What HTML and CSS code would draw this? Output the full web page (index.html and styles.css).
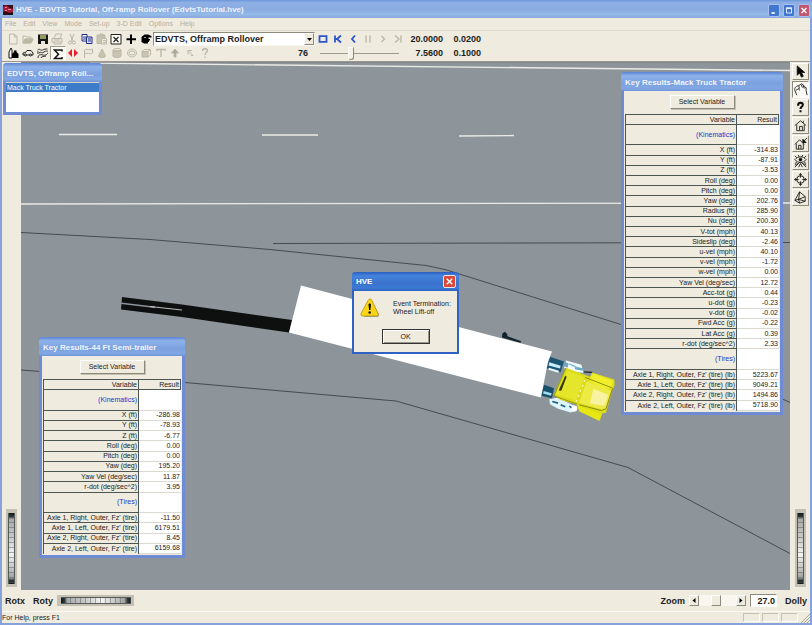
FILE: index.html
```html
<!DOCTYPE html>
<html lang="en">
<head>
<meta charset="utf-8">
<title>HVE - EDVTS Tutorial, Off-ramp Rollover</title>
<link rel="stylesheet" href="styles.css">
</head>
<body>
<div class="app">
  <header class="titlebar">
    <svg class="logo" viewBox="0 0 10 10"><rect width="10" height="10" fill="#3a0d18"/><path d="M0 2l3-2 4 3 3 1v3l-4 1-3-2-3 1z" fill="#a11c35"/><path d="M2 2h2v1H2zM5 4h3v1H5zM2 5h2v1H2z" fill="#f08a9a"/><path d="M6 8h4v2H5z" fill="#10131c"/></svg>
    <h1>HVE - EDVTS Tutorial, Off-ramp Rollover (EdvtsTutorial.hve)</h1>
    <div class="caption-buttons">
      <button class="cap" aria-label="Minimize"><svg viewBox="0 0 12 12"><path d="M3 8h4v2H3z" fill="#fff"/></svg></button>
      <button class="cap" aria-label="Maximize"><svg viewBox="0 0 12 12"><path d="M3 3.500h6v5.500H3z" fill="none" stroke="#fff"/><path d="M2.500 3h7" stroke="#fff" stroke-width="1.500"/></svg></button>
      <button class="cap cap-close" aria-label="Close"><svg viewBox="0 0 12 12"><path d="M3 3l6 6M9 3l-6 6" stroke="#fff" stroke-width="1.600"/></svg></button>
    </div>
  </header>
  <nav class="menubar">
    <a href="#">File</a><a href="#">Edit</a><a href="#">View</a><a href="#">Mode</a><a href="#">Set-up</a><a href="#">3-D Edit</a><a href="#">Options</a><a href="#">Help</a>
  </nav>
  <div class="toolbars">
    <div class="toolbar">
      <div class="icons icons-file">
        <button aria-label="New"><svg class="off" viewBox="0 0 14 14"><path d="M3.500 2h5l2.500 2.500V12H3.500zM8.500 2v3H11"/></svg></button>
        <button aria-label="Open"><svg class="off" viewBox="0 0 14 14"><path d="M2 11V4h3l1 1h4v2M2 11l2-4h8l-2 4z"/><path d="M4 7h8l-2 4H2z" fill="#bdb8a4"/></svg></button>
        <button aria-label="Save"><svg viewBox="0 0 14 14"><path d="M2 2.500h10v9.500H2z" fill="#161616"/><path d="M4 3h6v4H4z" fill="#8e9a62"/><path d="M5 9h4v3H5z" fill="#e8e8d8"/></svg></button>
        <button aria-label="Print"><svg class="off" viewBox="0 0 14 14"><path d="M4 6l2-4h6l-2 4M2 6.500h10V10H2zM4 10v2h7l1-2M4 8h6"/></svg></button>
        <button aria-label="Cut"><svg class="off" viewBox="0 0 14 14"><path d="M5 2l3 7M9 2L6 9"/><circle cx="5" cy="10.500" r="1.500"/><circle cx="9" cy="10.500" r="1.500"/></svg></button>
        <button aria-label="Copy"><svg viewBox="0 0 14 14"><path d="M2 2.500h5V9H2z" fill="#fff" stroke="#1b2a82"/><path d="M3 5h3M3 7h3" stroke="#1b2a82"/><path d="M6.500 5h5.500v6.500H6.500z" fill="#dfe5ff" stroke="#1b2a82"/><path d="M8 7h3M8 9h3" stroke="#1b2a82"/></svg></button>
        <button aria-label="Paste"><svg class="off" viewBox="0 0 14 14"><path d="M2 3h8v8.500H2z" fill="#c9c4b1"/><path d="M5 2h3v2H5z"/><path d="M6.500 6.500h5V12h-5z" fill="#efebdf"/><path d="M8 8.500h3M8 10.500h3"/></svg></button>
        <button aria-label="Reset"><svg viewBox="0 0 14 14"><path d="M2 2.500h10v9.500H2z" fill="#fbfaf3" stroke="#222"/><path d="M4.500 5l5 5M9.500 5l-5 5" stroke="#222" stroke-width="1.200"/></svg></button>
        <button aria-label="Add"><svg viewBox="0 0 14 14"><path d="M7 2.500v9.500M2.500 7.200h9.500" stroke="#000" stroke-width="2"/></svg></button>
        <button aria-label="Pick"><svg viewBox="0 0 14 14"><path d="M2.500 5l3-2.500H9l3.500 1.500v1.500H9.500V7H11v1.500h-1V10H9v1.500H5L2.500 10z" fill="#000"/><path d="M5 5.500h2" stroke="#999"/></svg></button>
      </div>
      <label class="combo" aria-label="Event">
        <select><option>EDVTS, Offramp Rollover</option></select>
        <span class="combo-arrow"><svg viewBox="0 0 5 3"><path d="M0 0h5L2.500 3z"/></svg></span>
      </label>
      <div class="icons icons-play">
        <button aria-label="Stop"><svg class="on" viewBox="0 0 14 14"><path d="M3.500 4.200h7v5.600h-7z"/></svg></button>
        <button aria-label="First"><svg class="on" viewBox="0 0 14 14"><path d="M4 3.500v7M10 3.500L6 7l4 3.500M4 7h3"/></svg></button>
        <button aria-label="Back"><svg class="on" viewBox="0 0 14 14"><path d="M9 3.500L6 7l3 3.500"/></svg></button>
        <button aria-label="Pause"><svg class="off thick" viewBox="0 0 14 14"><path d="M5 3.500v7M9 3.500v7"/></svg></button>
        <button aria-label="Forward"><svg class="off thick" viewBox="0 0 14 14"><path d="M5.500 4L8.500 7l-3 3"/></svg></button>
        <button aria-label="Last"><svg class="off thick" viewBox="0 0 14 14"><path d="M4 3.500L8 7l-4 3.500M10 3.500v7"/></svg></button>
      </div>
      <output class="time">20.0000</output><output class="time step">0.0200</output>
    </div>
    <div class="toolbar">
      <div class="icons icons-mode">
        <button aria-label="People"><svg viewBox="0 0 14 14"><path d="M3 12V6l1-2 1-2 1 2v8z" fill="#fff" stroke="#111"/><path d="M6 12V8l2-2V4.500h2.500V6L12.500 8v4z" fill="#000"/></svg></button>
        <button aria-label="Vehicle"><svg viewBox="0 0 14 14" fill="none" stroke="#222"><path d="M2 9V7l2.500-.5L6 4.500h4L12 7v2H2z"/><circle cx="4.500" cy="9" r="1" fill="#efebdf"/><circle cx="9.500" cy="9" r="1" fill="#efebdf"/></svg></button>
        <button aria-label="Environment"><svg viewBox="0 0 14 14" fill="none" stroke="#333"><path d="M1.500 4c2-2 3 1 5 0s3-1 5-1M3 7c2-2 3 1 5-1s3 0 4-1M2 12c0-3 2-4 5-3s4-1 5-2M5 12c0-2 3-1 5-2M2 5v3"/></svg></button>
        <button class="pressed" aria-label="Event"><svg viewBox="0 0 14 14"><path d="M11 4.500V3H3.500l4 4.200-4 4.300H11V10" fill="none" stroke="#111" stroke-width="1.500"/></svg></button>
        <button aria-label="Playback"><svg viewBox="0 0 14 14"><path d="M6 3v8L2 7zM8 3v8l4-4z" fill="#e8202c"/><path d="M5.500 4v6M8.500 4v6" stroke="#e8202c"/></svg></button>
        <button aria-label="Flag"><svg class="off" viewBox="0 0 14 14"><path d="M3.500 12V4c3-2 4 1 8-1v4c-3 2-5-1-8 1"/></svg></button>
        <button aria-label="Cone"><svg class="off" viewBox="0 0 14 14"><path d="M7 3l3.500 7c0 2-7 2-7 0z" fill="#c9c4b1"/></svg></button>
        <button aria-label="Cylinder"><svg class="off" viewBox="0 0 14 14"><path d="M3 4v6c0 2 8 2 8 0V4" fill="#c9c4b1"/><ellipse cx="7" cy="4" rx="4" ry="1.500"/></svg></button>
        <button aria-label="Sphere"><svg class="off" viewBox="0 0 14 14"><ellipse cx="7" cy="7" rx="4.500" ry="4"/><ellipse cx="7" cy="7" rx="3" ry="2"/></svg></button>
        <button aria-label="Box"><svg class="off" viewBox="0 0 14 14"><path d="M3 5.500h6V11H3z" fill="#c9c4b1"/><path d="M3 5.500l2-2h6.500V9L9 11M9 5.500l2.500-2"/></svg></button>
        <button aria-label="Text"><svg class="off thick" viewBox="0 0 14 14"><path d="M3 5V3.500h8V5M7 3.500V11"/></svg></button>
        <button aria-label="Light"><svg class="off" viewBox="0 0 14 14"><path d="M7 3l3.500 4H8v4H6V7H3.500z" fill="#aaa593"/></svg></button>
        <button aria-label="Select"><svg class="off" viewBox="0 0 14 14"><path d="M5 4.500h4M5 4.500v4M5 4.500l5 5M8 9.500h2"/></svg></button>
        <button aria-label="Help"><svg class="off thick" viewBox="0 0 14 14"><path d="M4.500 5c0-3 5-3 5-.5C9.500 6.500 7 6 7 9M7 10.500V12"/></svg></button>
      </div>
      <label class="frame" for="frame">76</label>
      <input id="frame" class="slider" type="range" min="0" max="200" value="76">
      <output class="time">7.5600</output><output class="time step">0.1000</output>
    </div>
  </div>

  <main class="workspace">
    <aside class="rail rail-left"><input class="wheel wheel-v" type="range" aria-label="Rotate X"></aside>
    <section class="viewport">
      <svg class="scene" viewBox="21 62 769 529" preserveAspectRatio="xMidYMid slice">
        <rect x="21" y="62" width="769" height="529" fill="#8d959b"/>
        <g fill="none" stroke="#e9eae4" stroke-width="1.300">
          <path d="M59 135h58M262 135.500h56M459 136.500l55-.5"/>
          <path d="M21 204.500L790 203.500"/><path d="M90 63.500L600 69l190 2"/>
        </g>
        <path d="M21 62.500h769" stroke="#777b7d"/>
        <g fill="none" stroke="#34393c" stroke-width=".8">
          <path d="M21 233l129 7 120 10 156 16 19 4 176 55 169 78"/>
          <path d="M273 244l517-1"/>
          <path d="M21 370.500L185 383l211 18.500L628 468l162 86"/>
        </g>
        <path d="M122 297.500l60 7.500 110 15.500-3 12.500-107-15.500-61-7.500z" fill="#0d100f"/>
        <path d="M121 303.800l34 4" stroke="#8d959b" stroke-width="1.600"/>
        <path d="M150 307l32 3.500" stroke="#cfd3d4" stroke-width=".9"/>
        <g transform="translate(460 310) scale(.3333)">
          <path d="M127 72l8-5 7 7v6l42 15-3 5-55-16z" fill="#11232c"/>
          <path d="M270 142l42 14-10 32-42-12z" fill="#1d5673"/><path d="M268 158l34 11-2 8-34-9z" fill="#c9ecfa"/><path d="M266 178l30 9" stroke="#eaf9ff" stroke-width="6"/>
          <path d="M268 187l26 6-14 39-26-7z" fill="#8d959b"/>
          <path d="M252 226l30 10-6 30-34-8z" fill="#174f69"/><path d="M250 248l24 7" stroke="#a4dcf2" stroke-width="8"/>
          <path d="M318 153l46 13 7 24-22-2-37-12z" fill="#f1fbff"/><path d="M314 157l12 5-3 12-10-3zM345 171l24 5-1 8-23-5z" fill="#68a9c7"/><path d="M328 163l25 12" stroke="#81b7ce" stroke-width="4"/>
          <path d="M268 269l24-4 54 25 4 14-18 5-38-11-24-14z" fill="#dff5fc"/><path d="M277 276l17 5M302 286l14 6M328 290l12 8" stroke="#1e6181" stroke-width="5"/><circle cx="343" cy="297" r="9" fill="#fff"/>
          <path d="M371 187l26 2" stroke="#20282b" stroke-width="4"/>
          <path d="M318 175l72 27 6-13 67 21 1 17-6 13-20 70-14 2-4 22-62-28-9-22-49-13-19-15z" fill="#dcdc18"/>
          <path d="M393 204l6-12 59 22-4 22-22 2-44-23z" fill="#f0ef2a"/>
          <path d="M355 290l72 23-10 21-56-28z" fill="#e8e716"/>
          <path d="M380 215l74 28-18 60-79-23z" fill="#eeea45"/><path d="M400 238l45 18-11 33-44-7z" fill="#f8f3a0"/>
          <path d="M322 184l50 19-24 71-62-20z" fill="#e5e52c"/><path d="M358 286l66 17 14-5 20-62M376 204l80 31" fill="none" stroke="#8a8c0e" stroke-width="3"/>
          <path d="M316 198l4 4-16 42-8-1z" fill="#34370b"/><path d="M374 212l-26 66" stroke="#f9fbc4" stroke-width="4" stroke-dasharray="5 11"/>
          <path d="M318 175l-36 84 70 25" fill="none" stroke="#989a0c" stroke-width="3"/>
        </g>
        <path d="M301 286l251 66-4 10-7 36-252-65z" fill="#fff"/>
      </svg>
    </section>
    <aside class="rail rail-right">
      <div class="view-tools">
        <button aria-label="Arrow"><svg viewBox="0 0 16 16"><path d="M4.500 2v10l2.500-2.500L9 14l2-1-2-4h3.500z" fill="#000"/></svg></button>
        <button class="pressed" aria-label="Hand"><svg viewBox="0 0 16 16"><path d="M4 14L2 9c-1-3 2-5 4-5l3-2 2 1 1 2 2 1v3l1 5M6 4l1 3M9 3l1 3M11 4l1 3M3 9l3-2 1 2" fill="#fbfaf5"/></svg></button>
        <button aria-label="Help"><svg viewBox="0 0 16 16"><path d="M5.500 6V4.500C6 2.500 10.500 2.500 10.500 5S8 7 8 9.500M8 11v2" stroke-width="2.200"/></svg></button>
        <button aria-label="Home"><svg viewBox="0 0 16 16"><path d="M2 8l6-5 6 5M4 7v6.500h8V7M7 13V9h3v4M11 5V3"/></svg></button>
        <button aria-label="Set home"><svg viewBox="0 0 16 16"><path d="M2 9l5-5 5 5M3.500 8v6h7.500V8M6 14v-4h2.500v4"/><path d="M15 2l-4 4M10.500 3.500V7H14z" fill="#000"/></svg></button>
        <button aria-label="View all"><svg viewBox="0 0 16 16"><path d="M2 6c3-4 9-4 12 0-3 4-9 4-12 0zM2 2l2 2M5.500 1l1 2M10.500 1l-1 2M14 2l-2 2M2 14l5-5M14 14L9 9M6 14l2-4 2 4M2 10l2-1M14 10l-2-1M2 12l3-2M14 12l-3-2"/><circle cx="8" cy="6" r="1.500" fill="#000"/></svg></button>
        <button aria-label="Seek"><svg viewBox="0 0 16 16"><circle cx="8" cy="8" r="4"/><path d="M8 2v4M8 10v4M2 8h4M10 8h4M6.500 3.500L8 1.500l1.500 2M6.500 12.500L8 14.500l1.500-2M3.500 6.500L1.500 8l2 1.500M12.500 6.500l2 1.500-2 1.500"/></svg></button>
        <button aria-label="Perspective"><svg viewBox="0 0 16 16"><path d="M2 11l5-9 6 5v5l-6 2zM2 11l4-1 7-3M6 10l1 4M7 2L6 10l7 2"/></svg></button>
      </div>
      <input class="wheel wheel-v" type="range" aria-label="Dolly wheel">
    </aside>
  </main>

  <div class="viewbar">
    <span class="vlabel">Rotx</span>
    <label class="vlabel" for="roty">Roty</label>
    <input id="roty" class="wheel wheel-h" type="range">
    <label class="vlabel zoom-label" for="zoom">Zoom</label>
    <div class="scroller">
      <button aria-label="Zoom out"><svg viewBox="0 0 4 5"><path d="M3.500 0v5L.5 2.500z"/></svg></button>
      <input type="range" aria-label="Zoom" min="0" max="100" value="45">
      <button aria-label="Zoom in"><svg viewBox="0 0 4 5"><path d="M.5 0v5l3-2.500z"/></svg></button>
    </div>
    <input id="zoom" class="zoom-value" type="text" value="27.0">
    <span class="vlabel">Dolly</span>
  </div>
  <footer class="statusbar">
    <span class="hint">For Help, press F1</span>
    <span class="pane"></span><span class="pane"></span><span class="pane"></span>
    <svg class="grip" viewBox="0 0 10 10"><path d="M1 10l9-9M4 10l6-6M7 10l3-3" stroke="#aaa58f"/></svg>
  </footer>

  <section class="window list-window">
    <h2>EDVTS, Offramp Roll...</h2>
    <ul class="objects"><li>Mack Truck Tractor</li></ul>
  </section>

  <section class="window results-window tractor">
    <h2>Key Results-Mack Truck Tractor</h2>
    <div class="results-body">
      <button class="push">Select Variable</button>
      <table>
        <thead><tr><th>Variable</th><th>Result</th></tr></thead>
        <tbody>
          <tr class="group"><th>(Kinematics)</th><td></td></tr>
          <tr><th>X (ft)</th><td>-314.83</td></tr>
          <tr><th>Y (ft)</th><td>-87.91</td></tr>
          <tr><th>Z (ft)</th><td>-3.53</td></tr>
          <tr><th>Roll (deg)</th><td>0.00</td></tr>
          <tr><th>Pitch (deg)</th><td>0.00</td></tr>
          <tr><th>Yaw (deg)</th><td>202.76</td></tr>
          <tr><th>Radius (ft)</th><td>285.90</td></tr>
          <tr><th>Nu (deg)</th><td>200.30</td></tr>
          <tr><th>V-tot (mph)</th><td>40.13</td></tr>
          <tr><th>Sideslip (deg)</th><td>-2.46</td></tr>
          <tr><th>u-vel (mph)</th><td>40.10</td></tr>
          <tr><th>v-vel (mph)</th><td>-1.72</td></tr>
          <tr><th>w-vel (mph)</th><td>0.00</td></tr>
          <tr><th>Yaw Vel (deg/sec)</th><td>12.72</td></tr>
          <tr><th>Acc-tot (g)</th><td>0.44</td></tr>
          <tr><th>u-dot (g)</th><td>-0.23</td></tr>
          <tr><th>v-dot (g)</th><td>-0.02</td></tr>
          <tr><th>Fwd Acc (g)</th><td>-0.22</td></tr>
          <tr><th>Lat Acc (g)</th><td>0.39</td></tr>
          <tr><th>r-dot (deg/sec^2)</th><td>2.33</td></tr>
          <tr class="group"><th>(Tires)</th><td></td></tr>
          <tr><th>Axle 1, Right, Outer, Fz' (tire) (lb)</th><td>5223.67</td></tr>
          <tr><th>Axle 1, Left, Outer, Fz' (tire) (lb)</th><td>9049.21</td></tr>
          <tr><th>Axle 2, Right, Outer, Fz' (tire) (lb)</th><td>1494.86</td></tr>
          <tr><th>Axle 2, Left, Outer, Fz' (tire) (lb)</th><td>5718.90</td></tr>
        </tbody>
      </table>
    </div>
  </section>

  <section class="window results-window trailer">
    <h2>Key Results-44 Ft Semi-trailer</h2>
    <div class="results-body">
      <button class="push">Select Variable</button>
      <table>
        <thead><tr><th>Variable</th><th>Result</th></tr></thead>
        <tbody>
          <tr class="group"><th>(Kinematics)</th><td></td></tr>
          <tr><th>X (ft)</th><td>-286.98</td></tr>
          <tr><th>Y (ft)</th><td>-78.93</td></tr>
          <tr><th>Z (ft)</th><td>-6.77</td></tr>
          <tr><th>Roll (deg)</th><td>0.00</td></tr>
          <tr><th>Pitch (deg)</th><td>0.00</td></tr>
          <tr><th>Yaw (deg)</th><td>195.20</td></tr>
          <tr><th>Yaw Vel (deg/sec)</th><td>11.87</td></tr>
          <tr><th>r-dot (deg/sec^2)</th><td>3.95</td></tr>
          <tr class="group"><th>(Tires)</th><td></td></tr>
          <tr><th>Axle 1, Right, Outer, Fz' (tire)</th><td>-11.50</td></tr>
          <tr><th>Axle 1, Left, Outer, Fz' (tire)</th><td>6179.51</td></tr>
          <tr><th>Axle 2, Right, Outer, Fz' (tire)</th><td>8.45</td></tr>
          <tr><th>Axle 2, Left, Outer, Fz' (tire)</th><td>6159.68</td></tr>
        </tbody>
      </table>
    </div>
  </section>

  <section class="dialog" role="alertdialog" aria-labelledby="dlg-title">
    <header><h2 id="dlg-title">HVE</h2><button class="dlg-close" aria-label="Close"><svg viewBox="0 0 12 12"><path d="M3 3l6 6M9 3l-6 6" stroke="#fff" stroke-width="1.500"/></svg></button></header>
    <div class="dialog-body">
      <div class="message">
        <svg class="warn" viewBox="0 0 20 20"><path d="M11 1.500L19.500 17l-1.500 2H4z" fill="#77786d" opacity=".6"/><path d="M10 1c1 0 1.300.4 1.700 1L18 15.500c.6 1.500 0 2.500-1.500 2.500h-14C1 18 .5 17 1 15.500L8.300 2c.4-.7.900-1 1.700-1z" fill="#fbd516" stroke="#a98a08" stroke-width=".7"/><path d="M8.500 6.500c0-1.500 2.500-1.500 2.500 0l-.6 5.500h-1.300z" fill="#111"/><circle cx="9.700" cy="14.500" r="1.300" fill="#111"/></svg>
        <p>Event Termination:<br>Wheel Lift-off</p>
      </div>
      <button class="ok">OK</button>
    </div>
  </section>
</div>
</body>
</html>
```
FILE: styles.css
```css
* { box-sizing: border-box; }
html, body { height: 100%; margin: 0; }
body { font: 7px/8px "Liberation Sans", Arial, sans-serif; color: #1c1c1c; overflow: hidden; }
h1, h2, p, ul { margin: 0; padding: 0; }
button, input, select { font: inherit; color: inherit; margin: 0; padding: 0; border: 0; background: none; border-radius: 0; }
svg { display: block; }
a { color: inherit; text-decoration: none; }

.app { position: relative; display: flex; flex-direction: column; min-height: 100%; background: #efebdf; border: solid #88a2dc; border-width: 0 2px 2px; }

.titlebar { display: flex; align-items: center; gap: 3px; height: 18px; margin: 0 -2px; padding: 2px 2px 0 3px; background: linear-gradient(#6f97dc, #8fb0e4 15%, #8aabe0 55%, #93bbe9 80%, #8aa6dc); }
.logo { width: 10px; height: 10px; }
.titlebar h1 { flex: 1; font: bold 8px/12px "Liberation Sans", Arial, sans-serif; color: #eef3fb; white-space: nowrap; }
.caption-buttons { display: flex; gap: 3px; }
.cap { width: 12px; height: 13px; border: 1px solid #a8c0ef; border-radius: 2px; background: #4277cf; }
.cap svg { width: 10px; height: 11px; }
.cap-close { background: #c2566c; }

.menubar { display: flex; gap: 7px; height: 13px; padding: 0 3px; align-items: center; color: #b5b09e; font-size: 7px; border-bottom: 1px solid #dedacb; }

.toolbars { height: 31px; padding: 1px 0 0 4px; border-bottom: 1px solid #9a988c; }
.toolbar { display: flex; align-items: center; height: 14px; }
.icons { display: grid; flex: none; }
.icons button { display: grid; place-items: center; height: 14px; }
.icons svg { width: 14px; height: 14px; }
.icons .pressed { background: #fbfaf4; border: solid; border-width: 1px; border-color: #a09c8c #fff #fff #a09c8c; }
.icons-file { width: 147px; grid-template-columns: repeat(10, 1fr); }
.icons-play { width: 90px; grid-template-columns: repeat(6, 1fr); }
.icons-mode { width: 206px; grid-template-columns: repeat(14, 1fr); }
.off { fill: none; stroke: #bdb8a6; }
.thick { stroke-width: 1.4; }
.on { fill: none; stroke: #2b55c8; stroke-width: 1.8; }
.combo { position: relative; display: flex; width: 162px; height: 14px; background: #fff; border: 1px solid; border-color: #8d8a7c #f8f6ee #f8f6ee #8d8a7c; }
.combo select { flex: 1; appearance: none; padding: 0 1px; font: bold 9px/12px "Liberation Sans", Arial, sans-serif; }
.combo-arrow { display: grid; place-items: center; width: 10px; background: #efebdf; border: 1px solid; border-color: #fff #8d8a7c #8d8a7c #fff; pointer-events: none; }
.combo-arrow svg { width: 5px; height: 3px; }
.time { width: 38px; text-align: right; font: bold 9px/12px "Liberation Sans", Arial, sans-serif; }
.frame { width: 96px; text-align: right; font: bold 9px/12px "Liberation Sans", Arial, sans-serif; }
.slider { appearance: none; width: 79px; height: 14px; margin: 0 6px 0 12px; background: linear-gradient(#9e9b8c, #9e9b8c) center / 100% 1px no-repeat; }
.slider::-webkit-slider-thumb { appearance: none; width: 6px; height: 13px; background: #f3f0e6; border: 1px solid; border-color: #fff #8d8a7c #8d8a7c #fff; border-radius: 0 0 3px 3px; }

.workspace { flex: 1; display: flex; min-height: 0; }
.rail { display: flex; flex-direction: column; align-items: center; padding-bottom: 3px; }
.rail-left { width: 19px; }
.rail-right { width: 20px; }
.rail .wheel { margin-top: auto; }
.viewport { position: relative; flex: 1; min-width: 0; overflow: hidden; }
.scene { position: absolute; inset: 0; width: 100%; height: 100%; }
.view-tools { display: grid; gap: 1px; padding-top: 1px; }
.view-tools button { width: 17px; height: 17px; border: 1px solid; border-color: #fff #8d8a7c #8d8a7c #fff; }
.view-tools .pressed { background: #fbfaf5; border-color: #8d8a7c #fff #fff #8d8a7c; }
.view-tools svg { width: 15px; height: 15px; fill: none; stroke: #111; stroke-width: .9; }

.wheel { appearance: none; }
.wheel::-webkit-slider-thumb { appearance: none; width: 1px; height: 1px; }
.wheel-v { writing-mode: vertical-lr; width: 11px; height: 78px; border: solid #c4c1b4; border-width: 4px 2px 3px; background: repeating-linear-gradient(transparent 0 4px, #5d5f5f80 4px 5px), linear-gradient(#11191b, #2f3839 5%, #a9abab 9%, #c9c9c7 35%, #f4f4f1 58%, #c4c4c2 78%, #a0a2a2 91%, #2f3839 95%, #11191b); box-shadow: inset 1px 0 #555b5b, inset -1px 0 #555b5b; }
.wheel-h { width: 77px; height: 11px; border: solid #c4c1b4; border-width: 2px 3px 2px 4px; background: repeating-linear-gradient(90deg, transparent 0 4px, #5d5f5f80 4px 5px), linear-gradient(90deg, #11191b, #2f3839 5%, #a9abab 9%, #c9c9c7 35%, #f4f4f1 58%, #c4c4c2 78%, #a0a2a2 91%, #2f3839 95%, #11191b); box-shadow: inset 0 1px #555b5b, inset 0 -1px #555b5b; }

.viewbar { display: flex; align-items: center; gap: 4px; height: 21px; padding: 0 3px; }
.vlabel { font: bold 9px/12px "Liberation Sans", Arial, sans-serif; }
.viewbar .vlabel:first-child { margin-right: 4px; }
.zoom-label { margin-left: auto; }
.scroller { display: flex; width: 57px; height: 11px; background: #f8f6ef; }
.scroller button { display: grid; place-items: center; width: 10px; border: 1px solid; border-color: #fff #8d8a7c #8d8a7c #fff; background: #efebdf; }
.scroller svg { width: 4px; height: 5px; }
.scroller input { appearance: none; flex: 1; min-width: 0; }
.scroller input::-webkit-slider-thumb { appearance: none; width: 10px; height: 11px; background: #efebdf; border: 1px solid; border-color: #fff #8d8a7c #8d8a7c #fff; }
.zoom-value { width: 27px; height: 13px; padding: 0 1px; text-align: right; font: bold 9px/11px "Liberation Sans", Arial, sans-serif; background: #fff; border: 1px solid; border-color: #8d8a7c #fff #fff #8d8a7c; }
.viewbar .vlabel:last-child { margin-left: 4px; }

.statusbar { display: flex; align-items: center; gap: 2px; height: 12px; border-top: 1px solid #fbfaf5; }
.hint { flex: 1; }
.pane { width: 17px; height: 9px; border: 1px solid; border-color: #c6c2b0 #fff #fff #c6c2b0; }
.grip { width: 10px; height: 10px; }

.window { position: absolute; display: flex; flex-direction: column; border: solid #6f8bd4; border-width: 0 3px 3px; border-radius: 4px 4px 0 0; background: #efebdf; }
.window h2 { height: 19px; margin: 0 -3px; padding: 0 4px; border-radius: 4px 4px 0 0; font: bold 8px/21px "Liberation Sans", Arial, sans-serif; color: #f0f5fd; white-space: nowrap; background: linear-gradient(#5b84d4, #8eb2ea 20%, #7ba0df 60%, #82a8e4 85%, #7194da); }
.list-window { left: 1px; top: 63px; width: 99px; height: 52px; }
.objects { flex: 1; list-style: none; background: #fff; border-top: 1px solid #d8d5c8; }
.objects li { padding: 0 1px; height: 9px; line-height: 9px; color: #fff; background: #3c7cc8; }
.results-window { width: max-content; }
.tractor { right: 27px; top: 72px; }
.trailer { left: 37px; top: 337px; }
.results-body { display: flex; flex-direction: column; align-items: center; gap: 5px; padding: 4px 1px 1px; }
.push { width: 65px; height: 14px; border: 1px solid; border-color: #fff #8d8a7c #8d8a7c #fff; box-shadow: 1px 1px #c6c2b2; }
table { border-collapse: separate; border-spacing: 0; table-layout: fixed; }
.tractor table { width: 154px; height: 297px; }
.trailer table { width: 138px; height: 175px; }
th, td { padding: 0 1px; height: 10px; text-align: right; font-weight: normal; white-space: nowrap; border-bottom: 1px solid #dcd9d0; }
th { border-bottom-color: #4c5754; border-left: 1px solid #4c5754; }
th:first-child { border-right: 1px solid #4c5754; }
tr > :last-child { width: 42px; }
thead th { height: 11px; border-top: 1px solid #4c5754; }
thead th:last-child { border-left: 0; border-right: 1px solid #4c5754; }
td { background: #fff; }
.group th, .group td { height: 20px; color: #2438c8; }
tbody tr:last-child th { border-bottom: 0; }

.dialog { position: absolute; left: 350px; top: 272px; width: 107px; border: solid #2f62c4; border-width: 0 2px 2px; border-radius: 4px 4px 0 0; background: #efebdf; }
.dialog header { display: flex; justify-content: space-between; align-items: center; height: 19px; margin: 0 -2px; padding: 0 3px 0 4px; border-radius: 4px 4px 0 0; background: linear-gradient(#2a5ec0, #4483dc 20%, #3a72cc 60%, #3b7ad6 85%, #2d60bd); }
.dialog h2 { font: bold 8px/12px "Liberation Sans", Arial, sans-serif; color: #fff; }
.dlg-close { width: 13px; height: 13px; border: 1px solid #e8e4f0; border-radius: 2px; background: #d9493a; }
.dlg-close svg { width: 11px; height: 11px; }
.dialog-body { display: flex; flex-direction: column; align-items: center; gap: 11px; padding: 7px 6px 8px; }
.message { display: flex; align-items: center; gap: 13px; width: 100%; }
.warn { width: 20px; height: 20px; }
.message p { white-space: nowrap; }
.ok { width: 48px; height: 15px; border: 1px solid #333; box-shadow: inset 1px 1px #fff, inset -1px -1px #9a978a; }
```
